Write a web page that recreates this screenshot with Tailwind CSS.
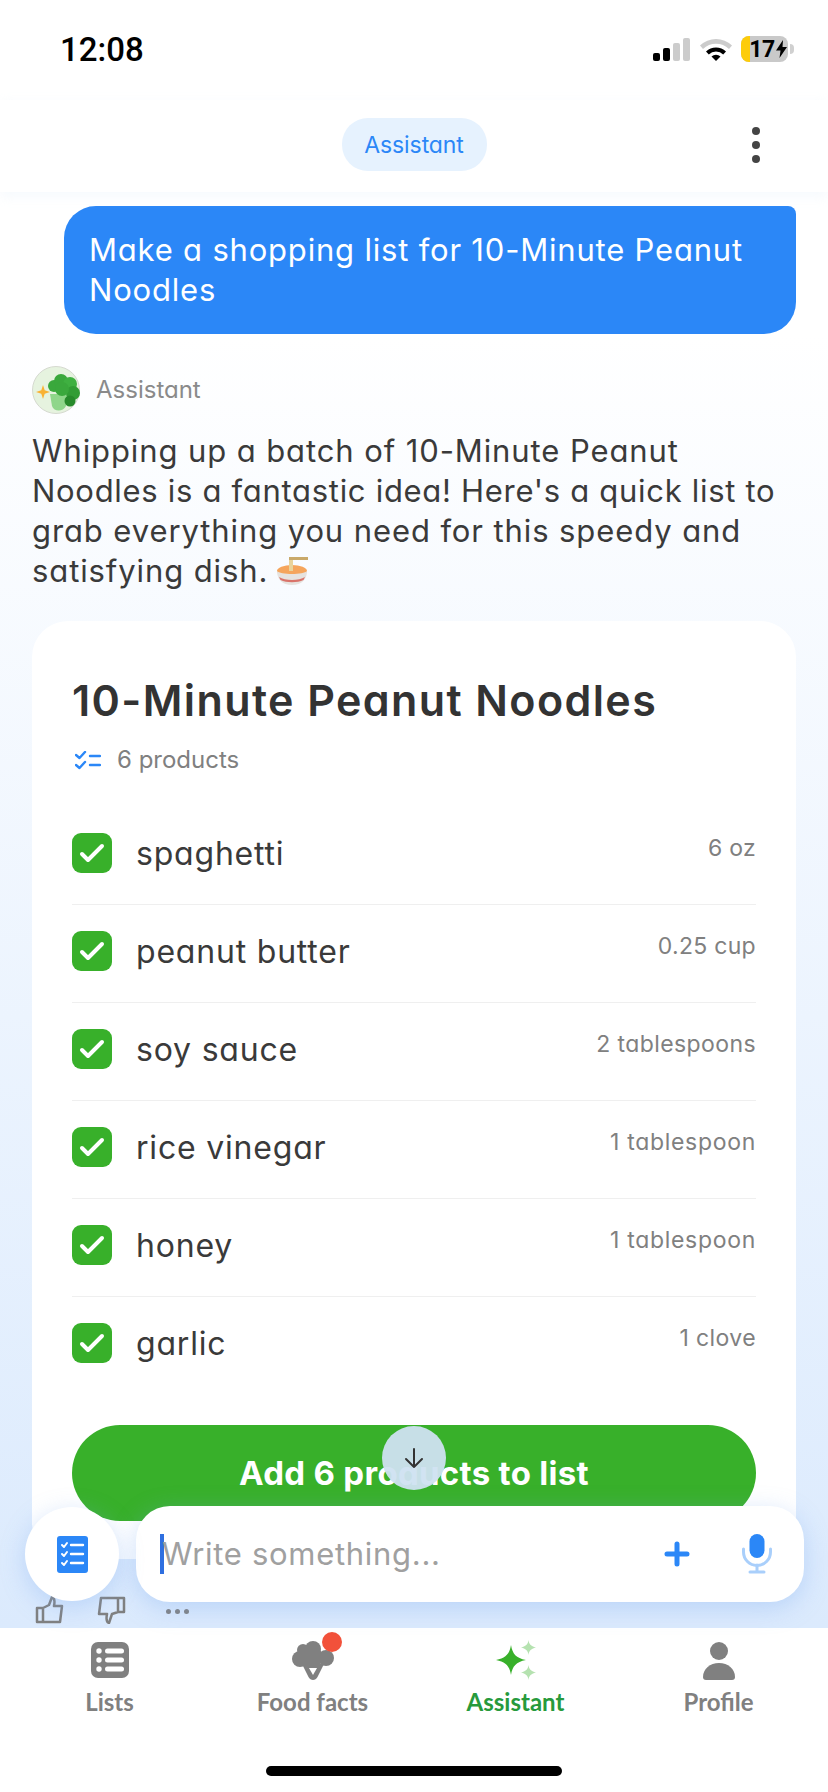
<!DOCTYPE html>
<html lang="en">
<head>
<meta charset="UTF-8">
<meta name="viewport" content="width=device-width, initial-scale=1.0">
<title>Assistant</title>
<script src="https://cdn.jsdelivr.net/npm/@tailwindcss/browser@4"></script>
</head>
<body class="font-['Inter',sans-serif] [font-feature-settings:'cv11'] text-[#3a3a3a]">
<div class="relative w-[828px] h-[1792px] overflow-hidden bg-white flex flex-col">

  <!-- status bar -->
  <div class="h-[100px] shrink-0 flex items-start justify-between bg-white">
    <span class="ml-[60px] mt-[30px] font-['Roboto',sans-serif] [font-feature-settings:normal] text-[33px] leading-[40px] font-medium text-black">12:08</span>
    <div class="mt-[36px] mr-[34px] flex items-center">
      <svg width="37" height="23" viewBox="0 0 37 23"><rect x="0" y="15" width="7" height="8" rx="2" fill="#000"/><rect x="10" y="10" width="7" height="13" rx="2" fill="#000"/><rect x="20" y="5" width="7" height="18" rx="2" fill="#ccc"/><rect x="30" y="0" width="7" height="23" rx="2" fill="#ccc"/></svg>
      <svg class="ml-[10px]" width="32" height="24" viewBox="0 0 32 24"><path d="M0 8.500a23 23 0 0 1 32 0l-3 3.500a19 19 0 0 0-26 0z" fill="#ccc"/><path d="M6 14.500a14.500 14.500 0 0 1 20 0l-2.800 3a10 10 0 0 0-14.400 0z" fill="#000"/><path d="M11.500 19.500a6.500 6.500 0 0 1 9 0L16 24z" fill="#000"/></svg>
      <div class="ml-[9px] relative w-[47px] h-[26px] rounded-[8px] overflow-hidden bg-[#c9c9c9] flex items-center justify-center gap-[1px] pl-[7px]">
        <div class="absolute left-0 top-0 bottom-0 w-[9px] bg-[#fdcc0a]"></div>
        <span class="relative font-['Roboto',sans-serif] [font-feature-settings:normal] text-[23px] leading-none font-bold text-black tracking-[-0.5px]">17</span>
        <svg class="relative" width="11" height="18" viewBox="0 0 11 18"><path d="M7 0L0 10.500h4.500L3.500 18 11 7H6.500z" fill="#000"/></svg>
      </div>
      <span class="ml-[2px] w-[4px] h-[10px] rounded-r-full bg-[#d0d0d0]"></span>
    </div>
  </div>

  <!-- header -->
  <div class="h-[92px] shrink-0 relative flex items-start justify-center bg-white shadow-[0_4px_12px_rgba(230,240,250,0.4)] z-10">
    <div class="mt-[18px] w-[145px] h-[53px] rounded-[26px] bg-[#e6f2fe] flex items-center justify-center text-[#2b87f7] text-[23px] tracking-[-0.1px] pt-[2px]">Assistant</div>
    <div class="absolute right-[68px] top-[27px] flex flex-col gap-[6px]">
      <span class="w-[8px] h-[8px] rounded-full bg-[#444]"></span>
      <span class="w-[8px] h-[8px] rounded-full bg-[#444]"></span>
      <span class="w-[8px] h-[8px] rounded-full bg-[#444]"></span>
    </div>
  </div>

  <!-- chat -->
  <div class="flex-1 min-h-0 overflow-hidden bg-gradient-to-b from-white from-[10%] to-[#dbeafd] px-[32px] pt-[14px]">
    <div class="ml-[32px] h-[128px] rounded-[32px] rounded-tr-[8px] bg-[#2b87f7] text-white text-[31px] tracking-[0.8px] leading-[40px] px-[25px] py-[24px]">Make a shopping list for 10-Minute Peanut Noodles</div>

    <div class="mt-[32px] flex items-center gap-[16px]">
      <svg width="48" height="48" viewBox="0 0 48 48">
        <circle cx="24" cy="24" r="23.500" fill="#e6f3df" stroke="#d5d9cf"/>
        <path d="M18 28h20l-4 12c-3 6-12 6-14 0z" fill="#8fd68a"/>
        <circle cx="22" cy="20" r="6" fill="#3aa83c"/><circle cx="29" cy="15" r="7" fill="#3aa83c"/><circle cx="38" cy="18" r="7" fill="#3fb041"/><circle cx="41" cy="27" r="7" fill="#329c35"/><circle cx="30" cy="23" r="7" fill="#3aa83c"/><circle cx="38" cy="35" r="5.500" fill="#278a2b"/>
        <path d="M11 19l1.700 5.300 5.300 1.700-5.300 1.700L11 33l-1.700-5.300L4 26l5.300-1.700z" fill="#f9b233"/>
      </svg>
      <span class="text-[24px] text-[#8a8a8a]">Assistant</span>
    </div>

    <p class="mt-[17px] text-[31px] tracking-[0.9px] leading-[40px] text-[#3a3a3a] whitespace-nowrap">Whipping up a batch of 10-Minute Peanut<br><span class="tracking-[0.7px]">Noodles is a fantastic idea! Here's a quick list to</span><br>grab everything you need for this speedy and<br><span class="inline-flex items-center gap-[8px]">satisfying dish.
      <svg width="32" height="30" viewBox="0 0 32 30"><ellipse cx="16" cy="15" rx="15" ry="6" fill="#f5a55c"/><path d="M1 15c3 4 27 4 30 0 0 8-5 14-15 14S1 23 1 15z" fill="#e6e3df"/><path d="M3 21c6 4 20 4 26 0l-1.500 3c-6 3-17 3-23 0z" fill="#d9736a"/><path d="M13 3h4v12h-4z" fill="#e9d39a"/><path d="M13 1h19v3H13z" fill="#c9a96a"/></svg></span></p>

    <!-- card -->
    <div class="mt-[30px] h-[938px] rounded-[36px] bg-white px-[40px] pt-[53px]">
      <h1 class="text-[43px] tracking-[1.4px] leading-[52px] font-semibold text-[#333]">10-Minute Peanut Noodles</h1>
      <div class="mt-[16px] ml-[3px] flex items-center gap-[16px] text-[24px] leading-[36px] text-[#808080]">
        <svg width="26" height="19" viewBox="0 0 26 19" fill="none" stroke="#2b87f7" stroke-width="2.400" stroke-linecap="round" stroke-linejoin="round"><path d="M1 4l3.500 3L10 1M1 14l3.500 3L10 11M15 5h10M15 14h10"/></svg>
        6 products
      </div>

      <div class="mt-[29px] flex flex-col">
        <div class="h-[98px] flex items-start justify-between border-b border-[#efefef] pt-[25px]">
          <div class="flex items-center gap-[24px] text-[32px] tracking-[0.8px] leading-[40px]"><span class="w-[40px] h-[40px] rounded-[9px] bg-[#38b02a] flex items-center justify-center"><svg width="26" height="20" viewBox="0 0 26 20" fill="none" stroke="#fff" stroke-width="4" stroke-linecap="round" stroke-linejoin="round"><path d="M3 11l6 6L23 3"/></svg></span><span class="mt-[2px]">spaghetti</span></div>
          <span class="text-[23px] tracking-[0.3px] leading-[32px] text-[#808080]">6 oz</span>
        </div>
        <div class="h-[98px] flex items-start justify-between border-b border-[#efefef] pt-[25px]">
          <div class="flex items-center gap-[24px] text-[32px] tracking-[0.8px] leading-[40px]"><span class="w-[40px] h-[40px] rounded-[9px] bg-[#38b02a] flex items-center justify-center"><svg width="26" height="20" viewBox="0 0 26 20" fill="none" stroke="#fff" stroke-width="4" stroke-linecap="round" stroke-linejoin="round"><path d="M3 11l6 6L23 3"/></svg></span><span class="mt-[2px]">peanut butter</span></div>
          <span class="text-[23px] tracking-[0.3px] leading-[32px] text-[#808080]">0.25 cup</span>
        </div>
        <div class="h-[98px] flex items-start justify-between border-b border-[#efefef] pt-[25px]">
          <div class="flex items-center gap-[24px] text-[32px] tracking-[0.8px] leading-[40px]"><span class="w-[40px] h-[40px] rounded-[9px] bg-[#38b02a] flex items-center justify-center"><svg width="26" height="20" viewBox="0 0 26 20" fill="none" stroke="#fff" stroke-width="4" stroke-linecap="round" stroke-linejoin="round"><path d="M3 11l6 6L23 3"/></svg></span><span class="mt-[2px]">soy sauce</span></div>
          <span class="text-[23px] tracking-[0.4px] leading-[32px] text-[#808080]">2 tablespoons</span>
        </div>
        <div class="h-[98px] flex items-start justify-between border-b border-[#efefef] pt-[25px]">
          <div class="flex items-center gap-[24px] text-[32px] tracking-[0.8px] leading-[40px]"><span class="w-[40px] h-[40px] rounded-[9px] bg-[#38b02a] flex items-center justify-center"><svg width="26" height="20" viewBox="0 0 26 20" fill="none" stroke="#fff" stroke-width="4" stroke-linecap="round" stroke-linejoin="round"><path d="M3 11l6 6L23 3"/></svg></span><span class="mt-[2px]">rice vinegar</span></div>
          <span class="text-[23px] tracking-[0.7px] leading-[32px] text-[#808080]">1 tablespoon</span>
        </div>
        <div class="h-[98px] flex items-start justify-between border-b border-[#efefef] pt-[25px]">
          <div class="flex items-center gap-[24px] text-[32px] tracking-[0.8px] leading-[40px]"><span class="w-[40px] h-[40px] rounded-[9px] bg-[#38b02a] flex items-center justify-center"><svg width="26" height="20" viewBox="0 0 26 20" fill="none" stroke="#fff" stroke-width="4" stroke-linecap="round" stroke-linejoin="round"><path d="M3 11l6 6L23 3"/></svg></span><span class="mt-[2px]">honey</span></div>
          <span class="text-[23px] tracking-[0.7px] leading-[32px] text-[#808080]">1 tablespoon</span>
        </div>
        <div class="h-[98px] flex items-start justify-between pt-[25px]">
          <div class="flex items-center gap-[24px] text-[32px] tracking-[0.8px] leading-[40px]"><span class="w-[40px] h-[40px] rounded-[9px] bg-[#38b02a] flex items-center justify-center"><svg width="26" height="20" viewBox="0 0 26 20" fill="none" stroke="#fff" stroke-width="4" stroke-linecap="round" stroke-linejoin="round"><path d="M3 11l6 6L23 3"/></svg></span><span class="mt-[2px]">garlic</span></div>
          <span class="text-[23px] tracking-[0.4px] leading-[32px] text-[#808080]">1 clove</span>
        </div>
      </div>

      <button class="mt-[30px] w-full h-[96px] rounded-[48px] bg-[#38b02a] text-white text-[33px] tracking-[0.3px] font-bold flex items-start justify-center pt-[24px]">Add 6 products to list</button>
    </div>
  </div>

  <!-- tab bar -->
  <div class="h-[164px] shrink-0 bg-white px-[8px] grid grid-cols-4 font-['Lato',sans-serif] [font-feature-settings:normal] text-[24px] font-bold text-[#808080] z-10">
    <div class="flex flex-col items-center pt-[14px]">
      <svg width="38" height="36" viewBox="0 0 38 36"><rect width="38" height="36" rx="7" fill="#808080"/><g fill="#fff"><circle cx="8" cy="9" r="2.700"/><circle cx="8" cy="18" r="2.700"/><circle cx="8" cy="27" r="2.700"/><rect x="14" y="6.500" width="19" height="5" rx="2.500"/><rect x="14" y="15.500" width="19" height="5" rx="2.500"/><rect x="14" y="24.500" width="19" height="5" rx="2.500"/></g></svg>
      <span class="mt-[8px] leading-[32px]">Lists</span>
    </div>
    <div class="relative flex flex-col items-center pt-[12px]">
      <svg width="42" height="40" viewBox="0 0 42 40"><g fill="#808080"><circle cx="11" cy="10" r="6"/><circle cx="21" cy="9" r="8"/><circle cx="8" cy="19" r="8"/><circle cx="34" cy="18" r="8"/><circle cx="21" cy="17" r="10"/><path d="M10 24h22l-6.500 13c-2 4-7 4-9 0z"/></g><path d="M17 28h8l-4 7z" fill="#fff"/></svg>
      <span class="absolute left-[111px] top-[4px] w-[20px] h-[20px] rounded-full bg-[#f2513a]"></span>
      <span class="mt-[6px] leading-[32px]">Food facts</span>
    </div>
    <div class="flex flex-col items-center pt-[12px] text-[#279a3c]">
      <svg width="40" height="40" viewBox="0 0 40 40"><path d="M15 5c1.500 9 5 13 15 15-10 2-13.500 6-15 15-1.500-9-5-13-15-15 10-2 13.500-6 15-15z" fill="#38b02a"/><path d="M32.500 0c.6 4 2 6 7.500 7.500-5.500 1.500-6.900 3.500-7.500 7.500-.6-4-2-6-7.500-7.500 5.500-1.500 6.900-3.500 7.500-7.500zM32.500 25c.6 4 2 6 7.500 7.500-5.500 1.500-6.900 3.500-7.500 7.500-.6-4-2-6-7.500-7.500 5.500-1.500 6.900-3.500 7.500-7.500z" fill="#b5e2b0"/></svg>
      <span class="mt-[6px] leading-[32px]">Assistant</span>
    </div>
    <div class="flex flex-col items-center pt-[14px]">
      <svg width="32" height="38" viewBox="0 0 32 38"><circle cx="16" cy="9" r="9" fill="#808080"/><path d="M0 35c0-8 7-14 16-14s16 6 16 14c0 2-1 3-3 3H3c-2 0-3-1-3-3z" fill="#808080"/></svg>
      <span class="mt-[6px] leading-[32px]">Profile</span>
    </div>
  </div>

  <!-- home indicator -->
  <div class="absolute left-[266px] top-[1766px] w-[296px] h-[10px] rounded-full bg-black z-20"></div>

  <!-- overlays above the card -->
  <div class="absolute left-[382px] top-[1426px] w-[64px] h-[64px] rounded-full bg-[#cfe1f1]/95 flex items-center justify-center z-30">
    <svg width="24" height="24" viewBox="0 0 24 24" fill="none" stroke="#333" stroke-width="2" stroke-linecap="round" stroke-linejoin="round"><path d="M12 3v18M4 13l8 8 8-8"/></svg>
  </div>

  <div class="absolute left-[136px] top-[1506px] w-[668px] h-[96px] rounded-[34px] bg-white shadow-[0_6px_24px_rgba(120,170,240,0.35)] flex items-center z-20">
    <span class="ml-[24px] w-[4px] h-[40px] bg-[#2f6fe0]"></span>
    <span class="-ml-[2px] text-[31px] tracking-[0.7px] text-[#a0a0a0]">Write something...</span>
    <svg class="ml-auto" width="26" height="26" viewBox="0 0 26 26" fill="none" stroke="#2b87f7" stroke-width="5" stroke-linecap="round"><path d="M13 3v20M3 13h20"/></svg>
    <svg class="ml-[52px] mr-[32px]" width="30" height="40" viewBox="0 0 30 40"><rect x="7.500" y="0" width="15" height="24" rx="7.500" fill="#2b87f7"/><path d="M1.500 15v3a13.500 13.500 0 0 0 27 0v-3" fill="none" stroke="#a9cffb" stroke-width="3" stroke-linecap="round"/><path d="M15 31v7M8 38h14" stroke="#a9cffb" stroke-width="3" stroke-linecap="round"/></svg>
  </div>

  <div class="absolute left-[25px] top-[1507px] w-[94px] h-[94px] rounded-full bg-white shadow-[0_6px_24px_rgba(120,170,240,0.35)] flex items-center justify-center z-20">
    <svg width="31" height="37" viewBox="0 0 31 37"><rect width="31" height="37" rx="3" fill="#2b87f7"/><g fill="none" stroke="#fff" stroke-width="2" stroke-linecap="round" stroke-linejoin="round"><path d="M5 9l2 2 3-4M5 18l2 2 3-4M5 27l2 2 3-4"/><path d="M14 9h12M14 18h12M14 27h12" stroke-width="2.400"/></g></svg>
  </div>

  <div class="absolute left-[35px] top-[1596px] flex items-center z-10">
    <svg width="29" height="28" viewBox="0 0 29 28" fill="none" stroke="#808080" stroke-width="2.500" stroke-linejoin="round" stroke-linecap="round"><path d="M8 12H2v14h6zM8 12l6-3 3-8c3 1 3 4 2 9h8l-2 16H8"/></svg>
    <svg class="ml-[33px]" width="29" height="28" viewBox="0 0 29 28" fill="none" stroke="#808080" stroke-width="2.500" stroke-linejoin="round" stroke-linecap="round"><path d="M21 16h6V2H21zM21 16l-6 2-3 9c-3-1-3-4-2-9H2L4 2h17"/></svg>
    <span class="ml-[40px] flex gap-[4px] mt-[2px]"><i class="w-[5px] h-[5px] rounded-full bg-[#808080]"></i><i class="w-[5px] h-[5px] rounded-full bg-[#808080]"></i><i class="w-[5px] h-[5px] rounded-full bg-[#808080]"></i></span>
  </div>
</div>
</body>
</html>
